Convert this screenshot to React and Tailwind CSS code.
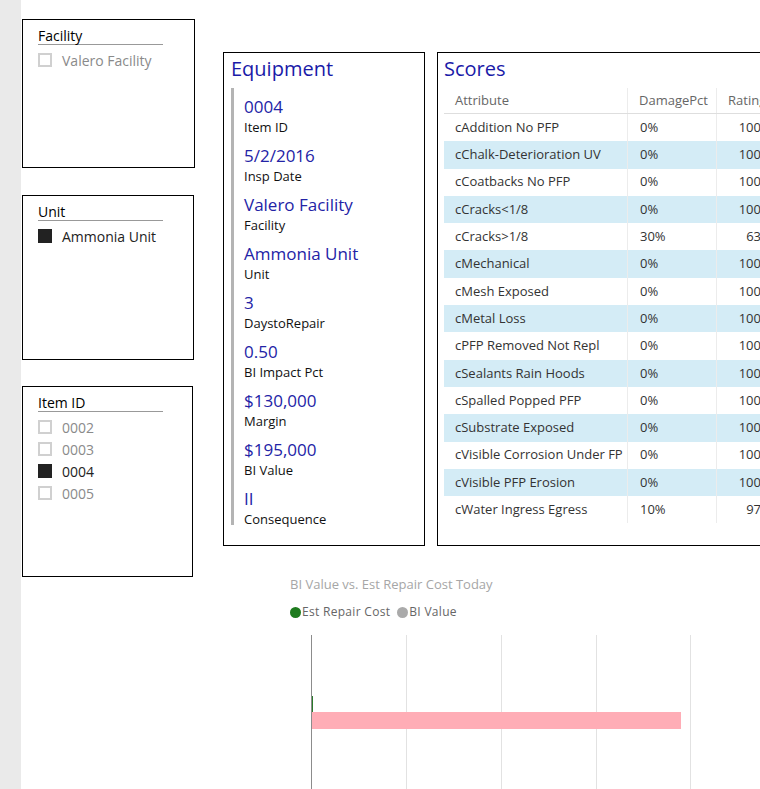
import React from 'react'

const font = { fontFamily: '"Open Sans", "Noto Sans", sans-serif' }

const equipment = [
  ['0004', 'Item ID'],
  ['5/2/2016', 'Insp Date'],
  ['Valero Facility', 'Facility'],
  ['Ammonia Unit', 'Unit'],
  ['3', 'DaystoRepair'],
  ['0.50', 'BI Impact Pct'],
  ['$130,000', 'Margin'],
  ['$195,000', 'BI Value'],
  ['II', 'Consequence'],
]

const scores = [
  ['cAddition No PFP', '0%', '100'],
  ['cChalk-Deterioration UV', '0%', '100'],
  ['cCoatbacks No PFP', '0%', '100'],
  ['cCracks<1/8', '0%', '100'],
  ['cCracks>1/8', '30%', '63'],
  ['cMechanical', '0%', '100'],
  ['cMesh Exposed', '0%', '100'],
  ['cMetal Loss', '0%', '100'],
  ['cPFP Removed Not Repl', '0%', '100'],
  ['cSealants Rain Hoods', '0%', '100'],
  ['cSpalled Popped PFP', '0%', '100'],
  ['cSubstrate Exposed', '0%', '100'],
  ['cVisible Corrosion Under FP', '0%', '100'],
  ['cVisible PFP Erosion', '0%', '100'],
  ['cWater Ingress Egress', '10%', '97'],
]

function Slicer({ title, items, className }) {
  return (
    <div className={`border border-black bg-white pl-[15px] pt-[7px] ${className}`}>
      <div className="w-[125px] h-[18px] leading-[18px] text-[14px] text-black border-b border-[#999]">{title}</div>
      <div className="mt-[4px]">
        {items.map(([label, on]) => (
          <div key={label} className="flex items-center h-[22px]">
            {on ? (
              <div className="w-[14px] h-[14px] bg-[#222]" />
            ) : (
              <div className="w-[14px] h-[14px] border-2 border-[#d0d0d0]" />
            )}
            <span className={`ml-[10px] text-[14px] ${on ? 'text-[#222]' : 'text-[#8a8a8a]'}`}>{label}</span>
          </div>
        ))}
      </div>
    </div>
  )
}

export default function App() {
  return (
    <div className="flex w-[760px] h-[789px] overflow-hidden bg-white" style={font}>
      <div className="w-[21px] shrink-0 bg-[#eaeaea]" />

      {/* slicers */}
      <div className="ml-[1px] pt-[19px] w-[173px] shrink-0 flex flex-col">
        <Slicer title="Facility" items={[['Valero Facility', false]]} className="h-[149px] w-[173px]" />
        <Slicer title="Unit" items={[['Ammonia Unit', true]]} className="mt-[27px] h-[165px] w-[172px]" />
        <Slicer
          title="Item ID"
          items={[['0002', false], ['0003', false], ['0004', true], ['0005', false]]}
          className="mt-[26px] h-[191px] w-[171px]"
        />
      </div>

      <div className="ml-[28px] flex flex-col shrink-0">
        <div className="flex pt-[52px]">
          {/* Equipment card */}
          <div className="w-[202px] h-[494px] border border-black shrink-0 pl-[7px]">
            <div className="h-[34px] leading-[32px] text-[20px] text-[#1a1aa8]">Equipment</div>
            <div className="border-l-[3px] border-[#b4b4b4] h-[437px] mt-[1px] pl-[10px] pt-[8px]">
              {equipment.map(([v, l]) => (
                <div key={l} className="mb-[9px]">
                  <div className="h-[22px] leading-[22px] text-[17px] text-[#2323a6]">{v}</div>
                  <div className="h-[18px] leading-[18px] text-[13px] text-[#111]">{l}</div>
                </div>
              ))}
            </div>
          </div>

          {/* Scores card */}
          <div className="ml-[12px] w-[360px] h-[494px] border border-black shrink-0 pl-[6px]">
            <div className="h-[34px] leading-[32px] text-[20px] text-[#1a1aa8]">Scores</div>
            <div className="mt-[1px] text-[13px] text-[#333]">
              <div className="flex h-[26px] items-center border-b border-[#dedede] text-[#666]">
                <div className="w-[184px] pl-[11px] h-full flex items-center border-r border-[#ececec]">Attribute</div>
                <div className="w-[89px] pl-[11px] h-full flex items-center border-r border-[#ececec]">DamagePct</div>
                <div className="pl-[11px] whitespace-nowrap">Rating</div>
              </div>
              {scores.map(([a, d, r], i) => (
                <div key={a} className={`flex h-[27.3px] items-center ${i % 2 ? 'bg-[#d4ecf6]' : 'bg-white'}`}>
                  <div className="w-[184px] pl-[11px] h-full flex items-center border-r border-[#ececec]">{a}</div>
                  <div className="w-[89px] pl-[12px] h-full flex items-center border-r border-[#ececec]">{d}</div>
                  <div className="w-[44px] text-right">{r}</div>
                </div>
              ))}
            </div>
          </div>
        </div>

        {/* chart */}
        <div className="mt-[29px] pl-[67px]">
          <div className="h-[18px] leading-[18px] text-[13px] text-[#a6a6a6]">BI Value vs. Est Repair Cost Today</div>
          <div className="mt-[11px] flex items-center h-[16px] text-[12px] tracking-[0.3px] text-[#666]">
            <span className="w-[11px] h-[11px] rounded-full bg-[#1e7b1e]" />
            <span className="ml-[1px]">Est Repair Cost</span>
            <span className="ml-[7px] w-[11px] h-[11px] rounded-full bg-[#aaa]" />
            <span className="ml-[1px]">BI Value</span>
          </div>
          <svg className="mt-[15px] block" width="470" height="160">
            {[116, 211, 306, 400].map((x) => (
              <line key={x} x1={x + 0.5} x2={x + 0.5} y1="0" y2="160" stroke="#e2e2e2" strokeWidth="1" />
            ))}
            <rect x="21" y="77" width="370" height="17" fill="#ffadb6" />
            <rect x="21" y="61" width="2" height="16" fill="#2a7a2a" />
            <line x1="21.5" x2="21.5" y1="0" y2="160" stroke="#8c8c8c" strokeWidth="1" />
          </svg>
        </div>
      </div>
    </div>
  )
}
